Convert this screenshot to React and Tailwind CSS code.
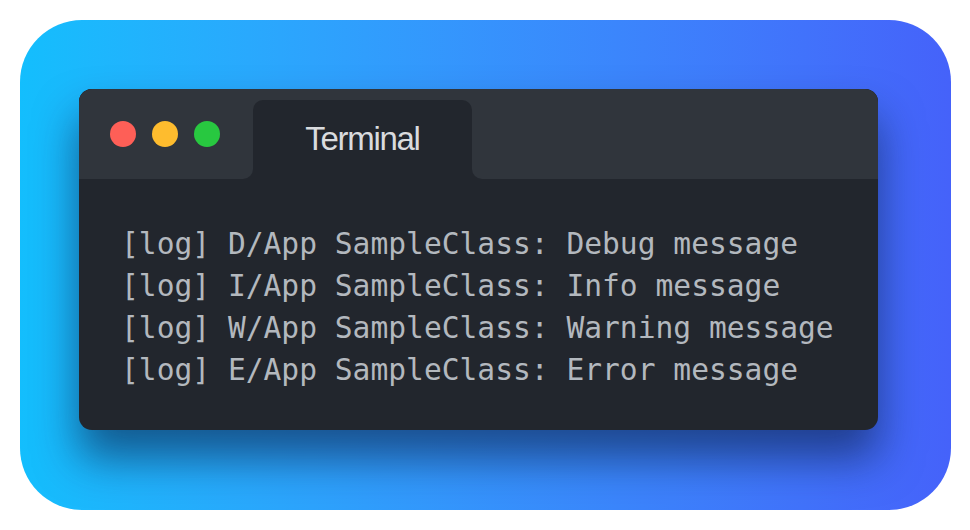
import React from "react";

const LINES = [
  "[log] D/App SampleClass: Debug message",
  "[log] I/App SampleClass: Info message",
  "[log] W/App SampleClass: Warning message",
  "[log] E/App SampleClass: Error message",
];

function TitleBar() {
  return (
    <div className="flex h-[90px] bg-[#22262d]">
      <div className="flex w-[174px] items-center gap-4 rounded-br-[10px] bg-[#30353c] pl-[31px]">
        <span className="h-[26px] w-[26px] rounded-full bg-[#fe5f57]" />
        <span className="h-[26px] w-[26px] rounded-full bg-[#febc2e]" />
        <span className="h-[26px] w-[26px] rounded-full bg-[#28c840]" />
      </div>
      <div className="flex w-[219px] flex-col bg-[#30353c] pt-[11px]">
        <div className="flex flex-1 items-center justify-center rounded-t-[10px] bg-[#22262d] pb-[2px] font-['Liberation_Sans',Arial,sans-serif] text-[33px] tracking-[-1.3px] text-[#d9dbde]">
          Terminal
        </div>
      </div>
      <div className="flex-1 rounded-bl-[10px] bg-[#30353c]" />
    </div>
  );
}

export default function App() {
  return (
    <div className="h-[530px] w-[970px] bg-white pl-[20px] pt-[20px]">
      <div className="h-[490px] w-[931px] rounded-[62px] bg-linear-to-r from-[#13befd] to-[#4562fa] pl-[59px] pt-[69px]">
        <div className="w-[799px] overflow-hidden rounded-[13px] bg-[#22262d] shadow-[0_28px_44px_rgba(10,30,70,0.6)]">
          <TitleBar />
          <div className="pb-[39px] pl-[42px] pt-[44px] font-['DejaVu_Sans_Mono',monospace] text-[29.6px] leading-[42px] text-[#b3b8be]">
            {LINES.map((line) => (
              <div key={line} className="whitespace-pre">
                {line}
              </div>
            ))}
          </div>
        </div>
      </div>
    </div>
  );
}
